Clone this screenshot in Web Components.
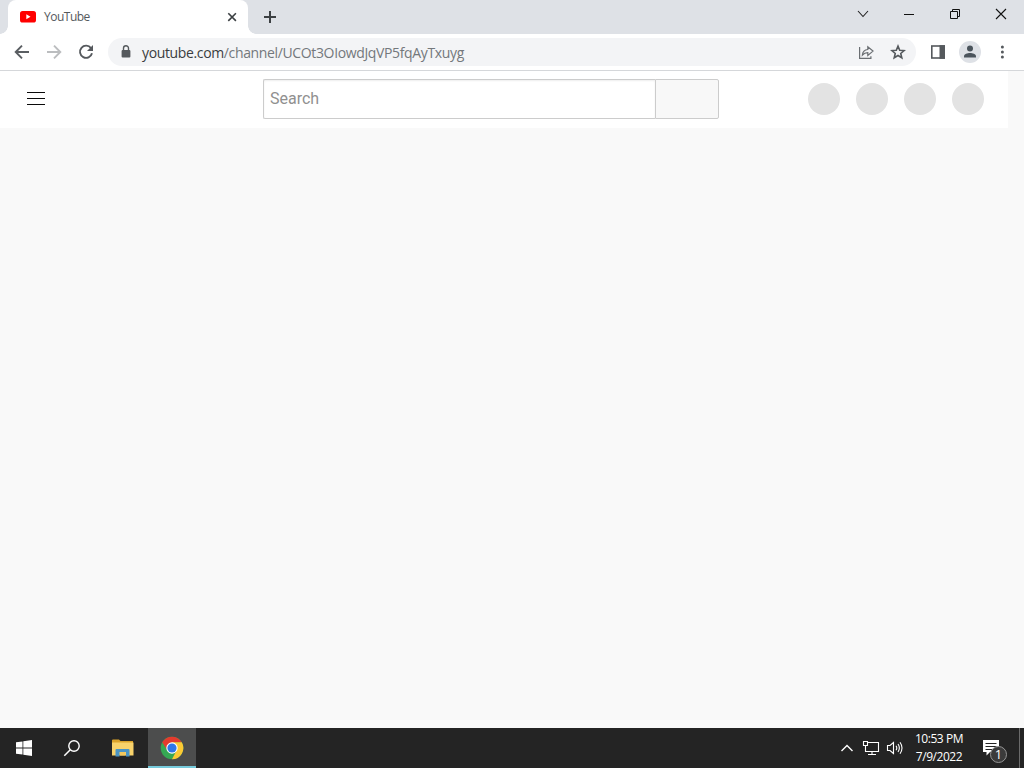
<!DOCTYPE html>
<html lang="en">
<head>
<meta charset="utf-8">
<title>YouTube</title>
<style>
  body {
    margin: 0;
    width: 1024px;
    height: 768px;
    overflow: hidden;
    display: flex;
    flex-direction: column;
    font-family: "Open Sans", "Noto Sans", sans-serif;
  }
</style>
</head>
<body>
<tab-strip>YouTube</tab-strip>
<browser-toolbar><span slot="host">youtube.com</span><span slot="path">/channel/UCOt3OIowdJqVP5fqAyTxuyg</span></browser-toolbar>
<yt-page></yt-page>
<task-bar><span slot="time">10:53 PM</span><span slot="date">7/9/2022</span></task-bar>

<script>
class BaseElement extends HTMLElement {
  constructor() {
    super();
    this.attachShadow({ mode: "open" }).innerHTML = this.render();
  }
}

class TabStrip extends BaseElement {
  render() {
    return `
    <style>
      :host { display: flex; height: 34px; background: #dee1e6; padding-left: 8px; box-sizing: border-box; }
      .tab {
        position: relative;
        display: flex;
        align-items: center;
        width: 240px;
        box-sizing: border-box;
        padding: 0 10px 0 12px;
        background: #fff;
        border-radius: 8px 8px 0 0;
        color: #55595d;
        font-size: 12px;
      }
      .tab::before, .tab::after {
        content: "";
        position: absolute;
        bottom: 0;
        width: 8px;
        height: 8px;
      }
      .tab::before { left: -8px; background: radial-gradient(circle at 0 0, transparent 7.5px, #fff 8px); }
      .tab::after { right: -8px; background: radial-gradient(circle at 100% 0, transparent 7.5px, #fff 8px); }
      .title { flex: 1; margin-left: 8px; padding-bottom: 1px; letter-spacing: -0.5px; }
      svg { display: block; flex: none; }
      .plus { margin: 9px 0 0 14px; }
      .controls { display: flex; margin-left: auto; height: 28px; }
      .controls div { width: 46px; display: flex; align-items: center; justify-content: center; }
    </style>
    <div class="tab">
      <svg width="16" height="16" viewBox="0 0 16 16"><rect y="2" width="16" height="11.5" rx="2.6" fill="#f00"/><path d="M6.3 5.3v4.9l4.2-2.45z" fill="#fff"/></svg>
      <span class="title"><slot></slot></span>
      <svg width="12" height="12" viewBox="0 0 12 12"><path d="M2.3 2.3l7.6 7.6M9.9 2.3L2.3 9.9" stroke="#3c4043" stroke-width="1.6"/></svg>
    </div>
    <svg class="plus" width="16" height="16" viewBox="0 0 16 16"><path d="M8 2v12M2 8h12" stroke="#3c4043" stroke-width="2"/></svg>
    <div class="controls">
      <div><svg width="12" height="12" viewBox="0 0 12 12"><path d="M1 3l5 5.5L11 3" fill="none" stroke="#222" stroke-width="1.1"/></svg></div>
      <div><svg width="10" height="10" viewBox="0 0 10 10"><path d="M0 5.5h10" stroke="#111"/></svg></div>
      <div><svg width="10" height="10" viewBox="0 0 10 10"><path d="M.5 2.5h7v7h-7zM2.5 2.5v-2h7v7h-2" fill="none" stroke="#111"/></svg></div>
      <div><svg width="12" height="12" viewBox="0 0 12 12"><path d="M1 1l10 10M11 1L1 11" stroke="#111" stroke-width="1.1"/></svg></div>
    </div>`;
  }
}

class BrowserToolbar extends BaseElement {
  render() {
    return `
    <style>
      :host {
        display: flex;
        align-items: center;
        height: 37px;
        box-sizing: border-box;
        padding: 0 14px;
        background: #fff;
        border-bottom: 1px solid #d5d7da;
      }
      svg { display: block; flex: none; }
      .nav { display: flex; gap: 16px; margin-right: 14px; }
      .address {
        display: flex;
        align-items: center;
        width: 808px;
        height: 28px;
        box-sizing: border-box;
        padding: 0 10px;
        border-radius: 14px;
        background: #f3f4f6;
        font-size: 14px;
      }
      .url { flex: 1; margin-left: 8px; white-space: nowrap; color: #74787c; letter-spacing: -0.36px; }
      .host { color: #3a3d40; }
      .address .star { margin-left: 16px; }
      .side { margin-left: 14px; }
      .avatar { margin: 0 13px 0 13px; }
    </style>
    <div class="nav">
      <svg width="16" height="16" viewBox="0 0 16 16"><path d="M15 8H2M8 1.7L1.7 8 8 14.3" fill="none" stroke="#5a5e62" stroke-width="1.9"/></svg>
      <svg width="16" height="16" viewBox="0 0 16 16"><path d="M1 8h13M8 1.7L14.3 8 8 14.3" fill="none" stroke="#bbbdbf" stroke-width="1.9"/></svg>
      <svg width="16" height="16" viewBox="0 0 16 16"><path d="M13 4.1A6.1 6.1 0 1 0 14 9.3" fill="none" stroke="#55595d" stroke-width="1.9"/><path d="M15 1v6H9z" fill="#55595d"/></svg>
    </div>
    <div class="address">
      <svg width="16" height="16" viewBox="0 0 16 16"><rect x="3.6" y="6" width="8.8" height="7.4" rx="1" fill="#55595d"/><path d="M5.5 6.5V4.2a2.5 2.5 0 0 1 5 0v2.3" fill="none" stroke="#55595d" stroke-width="1.4"/></svg>
      <span class="url"><span class="host"><slot name="host"></slot></span><slot name="path"></slot></span>
      <svg width="16" height="16" viewBox="0 0 16 16"><path d="M1.6 3v11.400h11.300v-2.200M4.400 11c.3-3.600 2.200-5.300 5.400-5.500V2.700L15 7.100l-5.200 4.300V8.600C7.400 8.600 5.800 9.400 4.400 11z" fill="none" stroke="#6a6e72" stroke-width="1.2"/></svg>
      <svg class="star" width="16" height="16" viewBox="0 0 16 16"><path d="M8 2.100l1.700 4.100 4.400.35-3.350 2.900 1.050 4.350L8 11.500l-3.800 2.300 1.050-4.350L1.900 6.550l4.400-.35z" fill="none" stroke="#55595d" stroke-width="1.6"/></svg>
    </div>
    <svg class="side" width="16" height="16" viewBox="0 0 16 16"><rect x="1.8" y="2" width="12.4" height="12" fill="none" stroke="#55595d" stroke-width="1.6"/><path d="M9.5 1.2H15v13.6H9.5z" fill="#55595d"/></svg>
    <svg class="avatar" width="22" height="22" viewBox="0 0 22 22"><circle cx="11" cy="11" r="11" fill="#dee1e6"/><circle cx="11" cy="7.500" r="3" fill="#4b545c"/><path d="M5 16.500v-1.200c0-2.400 3.500-3.400 6-3.400s6 1 6 3.400v1.200z" fill="#4b545c"/></svg>
    <svg width="16" height="16" viewBox="0 0 16 16"><g fill="#55595d"><circle cx="8.4" cy="3" r="1.5"/><circle cx="8.4" cy="8" r="1.5"/><circle cx="8.4" cy="13" r="1.5"/></g></svg>`;
  }
}

class YtPage extends BaseElement {
  render() {
    return `
    <style>
      :host { display: block; flex: 1; background: #f9f9f9; }
      header {
        display: flex;
        align-items: center;
        justify-content: space-between;
        width: 1008px;
        height: 57px;
        box-sizing: border-box;
        padding: 0 24px 1px 27px;
        background: #fff;
      }
      svg { display: block; }
      .icons { display: flex; gap: 16px; }
      .icons i { width: 32px; height: 32px; border-radius: 50%; background: #e3e3e3; }
      yt-search { margin-left: 129px; }
    </style>
    <header>
      <svg width="18" height="14" viewBox="0 0 18 14"><path d="M0 .5h18M0 6.500h18M0 12.500h18" stroke="#0a0a0a"/></svg>
      <yt-search>Search</yt-search>
      <div class="icons"><i></i><i></i><i></i><i></i></div>
    </header>`;
  }
}

class YtSearch extends BaseElement {
  render() {
    return `
    <style>
      :host { display: flex; width: 456px; height: 40px; }
      .field {
        flex: 1;
        box-sizing: border-box;
        padding-left: 6px;
        border: 1px solid #ccc;
        border-right: 0;
        border-radius: 2px 0 0 2px;
        box-shadow: inset 0 1px 2px #eee;
        font: 16px/37px Roboto, sans-serif;
        color: #909090;
      }
      .button {
        width: 64px;
        box-sizing: border-box;
        border: 1px solid #ccc;
        border-radius: 0 2px 2px 0;
        background: #f8f8f8;
      }
    </style>
    <div class="field"><slot></slot></div>
    <div class="button"></div>`;
  }
}

class TaskBar extends BaseElement {
  render() {
    return `
    <style>
      :host { display: flex; height: 40px; background: #242424; color: #fff; }
      svg { display: block; flex: none; }
      .item { width: 48px; display: flex; align-items: center; justify-content: center; box-sizing: border-box; }
      .wide { width: 52px; padding-left: 2px; }
      .active { background: #4c4d4d; border-bottom: 2px solid #76cbdc; padding-top: 2px; }
      .tray { display: flex; align-items: center; margin-left: auto; }
      .tray svg + svg { margin-left: 8px; }
      .tray svg:last-child { margin-left: 6px; }
      .clock {
        display: flex;
        flex-direction: column;
        align-items: center;
        width: 69px;
        padding: 2px 0 0 1px;
        box-sizing: border-box;
        font-size: 12px;
        line-height: 18px;
        letter-spacing: -0.45px;
        white-space: nowrap;
      }
      .notes { position: relative; width: 46px; height: 40px; }
      .notes svg { margin: 12px 0 0 10px; }
      .badge {
        position: absolute;
        left: 17px;
        top: 18px;
        width: 17px;
        height: 17px;
        box-sizing: border-box;
        border: 1px solid #959595;
        border-radius: 50%;
        background: #3b3b3b;
        font-size: 13px;
        line-height: 15px;
        text-align: center;
      }
      .desktop { width: 5px; border-left: 1px solid #6b6b6b; box-sizing: border-box; }
    </style>
    <div class="item"><svg width="16" height="16" viewBox="0 0 16 16"><path d="M0 2.300L6.500 1.400v6.200H0zM7.300 1.300L16 0v7.600H7.300zM0 8.400h6.500v6.200L0 13.700zM7.300 8.400H16V16l-8.700-1.300z" fill="#fff"/></svg></div>
    <div class="item"><svg width="18" height="18" viewBox="0 0 18 18"><circle cx="11" cy="7" r="5.2" fill="none" stroke="#fff" stroke-width="1.4"/><path d="M7.300 10.700L1.300 16.700" stroke="#fff" stroke-width="1.5"/></svg></div>
    <div class="item wide"><svg width="22" height="18" viewBox="0 0 22 18">
      <path d="M0 1.500Q0 .5 1 .5h6l1.500 1.500H21V5H0z" fill="#dba32b"/>
      <path d="M0 3.500h21.500V16.500H0z" fill="#f8d26b"/>
      <path d="M3.500 17.500V11q0-1 1-1h12q1 0 1 1v6.500H14V13H7.500v4.500z" fill="#4a94c4"/>
      <path d="M8 13h5.500v3.500H8z" fill="#f3c75c"/></svg></div>
    <div class="item active"><svg width="24" height="24" viewBox="0 0 24 24">
      <circle cx="12" cy="12" r="11.3" fill="#35a853"/>
      <path d="M2.200 6.350A11.300 11.300 0 0 1 21.800 6.350L12 6.800 7.500 14.600z" fill="#e33b2e"/>
      <path d="M21.800 6.350A11.300 11.300 0 0 1 12 23.300L16.500 14.600 12 6.350z" fill="#fcc934"/>
      <circle cx="12" cy="12" r="5.7" fill="#fff"/><circle cx="12" cy="12" r="4.6" fill="#2f76e8"/></svg></div>
    <div class="tray">
      <svg width="14" height="12" viewBox="0 0 14 12"><path d="M1.500 9L7 3.500 12.500 9" fill="none" stroke="#fff" stroke-width="1.4"/></svg>
      <svg width="18" height="16" viewBox="0 0 18 16"><path d="M5.500 2.500h11v9H3.500V7M10 11.500v3M6 14.500h8M1.500 1.500h4v4h-4zM3.500 5.500v2" fill="none" stroke="#fff" stroke-width="1.1"/></svg>
      <svg width="18" height="16" viewBox="0 0 18 16"><path d="M1.500 5.500H4l3.500-3v11l-3.500-3H1.500zM10 5.700q1.600 2.300 0 4.600M12 4q2.700 4 0 8M14 2.300q4 5.700 0 11.400" fill="none" stroke="#fff" stroke-width="1.1"/></svg>
    </div>
    <div class="clock"><slot name="time"></slot><slot name="date"></slot></div>
    <div class="notes">
      <svg width="16" height="17" viewBox="0 0 16 17"><path d="M0 0h16v12H7l-3.500 3.500V12H0z" fill="#fff"/><path d="M2.500 3.500h11M2.500 6.500h11M2.500 9.500h7" stroke="#242424" stroke-width="1.1"/></svg>
      <span class="badge">1</span>
    </div>
    <div class="desktop"></div>`;
  }
}

customElements.define("tab-strip", TabStrip);
customElements.define("browser-toolbar", BrowserToolbar);
customElements.define("yt-search", YtSearch);
customElements.define("yt-page", YtPage);
customElements.define("task-bar", TaskBar);
</script>
</body>
</html>
